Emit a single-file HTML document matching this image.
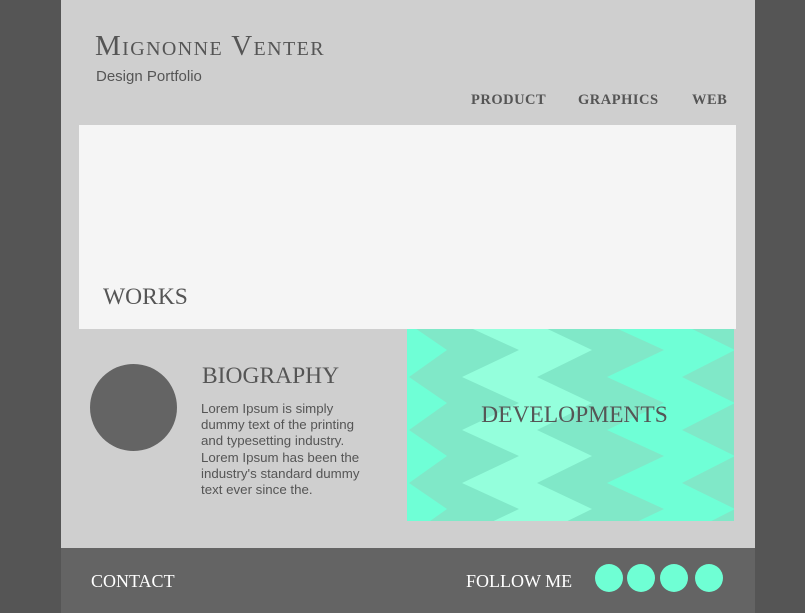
<!DOCTYPE html>
<html><head><meta charset="utf-8"><style>
*{margin:0;padding:0;box-sizing:border-box}
body{width:805px;height:613px;background:#555;position:relative;overflow:hidden;font-family:"Liberation Serif","DejaVu Serif",serif}
#wrap{position:absolute;left:61px;top:0;width:694px;height:613px;background:#cfcfcf}
.abs{position:absolute}
.title{left:95px;top:30px;font-size:29px;color:#555;font-variant:small-caps;letter-spacing:1.4px}
.sub{left:96px;top:68px;font-family:"Liberation Sans",sans-serif;font-size:15px;color:#555}
.nav{top:92px;font-size:14.5px;font-weight:bold;color:#555;letter-spacing:0.5px}
#hero{left:79px;top:125px;width:657px;height:204px;background:#f5f5f5}
.works{left:103px;top:284px;font-size:23.5px;color:#555}
.avatar{left:90px;top:364px;width:87px;height:87px;border-radius:50%;background:#646464}
.bio{left:202px;top:363px;font-size:23.5px;color:#555}
.lorem{left:201px;top:401px;width:172px;font-family:"Liberation Sans",sans-serif;font-size:13.3px;line-height:16.2px;color:#555}
#dev{left:407px;top:329px;width:327px;height:192px;overflow:hidden}
.devt{left:407px;top:402px;width:327px;text-align:center;font-size:23.5px;color:#555;padding-left:8px}
#foot{left:61px;top:548px;width:694px;height:65px;background:#646464}
.ft{top:571px;font-size:18px;color:#fff}
.c{top:564px;width:28px;height:28px;border-radius:50%;background:#6fffd4}
</style></head><body>
<div id="wrap"></div>
<div class="abs title">Mignonne Venter</div>
<div class="abs sub">Design Portfolio</div>
<div class="abs nav" style="left:471px">PRODUCT</div>
<div class="abs nav" style="left:578px">GRAPHICS</div>
<div class="abs nav" style="left:692px">WEB</div>
<div id="hero" class="abs"></div>
<div class="abs works">WORKS</div>
<div class="abs avatar"></div>
<div class="abs bio">BIOGRAPHY</div>
<div class="abs lorem">Lorem Ipsum is simply dummy text of the printing and typesetting industry. Lorem Ipsum has been the industry's standard dummy text ever since the.</div>
<div id="dev" class="abs">
<svg width="327" height="192" viewBox="0 0 327 192">
<rect width="327" height="192" fill="#6fffd6"/>
<polygon fill="#80e8c8" points="2,-5 40,21 2,48 40,74 2,101 40,127 2,154 40,180 2,207 400,207 400,-5"/>
<polygon fill="#94ffdc" points="55,-5 112,21 55,48 112,74 55,101 112,127 55,154 112,180 55,207 400,207 400,-5"/>
<polygon fill="#80e8c8" points="130,-5 185,21 130,48 185,74 130,101 185,127 130,154 185,180 130,207 400,207 400,-5"/>
<polygon fill="#6fffd6" points="200,-5 257,21 200,48 257,74 200,101 257,127 200,154 257,180 200,207 400,207 400,-5"/>
<polygon fill="#80e8c8" points="275,-5 328,21 275,48 328,74 275,101 328,127 275,154 328,180 275,207 400,207 400,-5"/>
</svg></div>
<div class="abs devt">DEVELOPMENTS</div>
<div id="foot" class="abs"></div>
<div class="abs ft" style="left:91px">CONTACT</div>
<div class="abs ft" style="left:466px">FOLLOW ME</div>
<div class="abs c" style="left:595px"></div>
<div class="abs c" style="left:627px"></div>
<div class="abs c" style="left:660px"></div>
<div class="abs c" style="left:695px"></div>
</body></html>
